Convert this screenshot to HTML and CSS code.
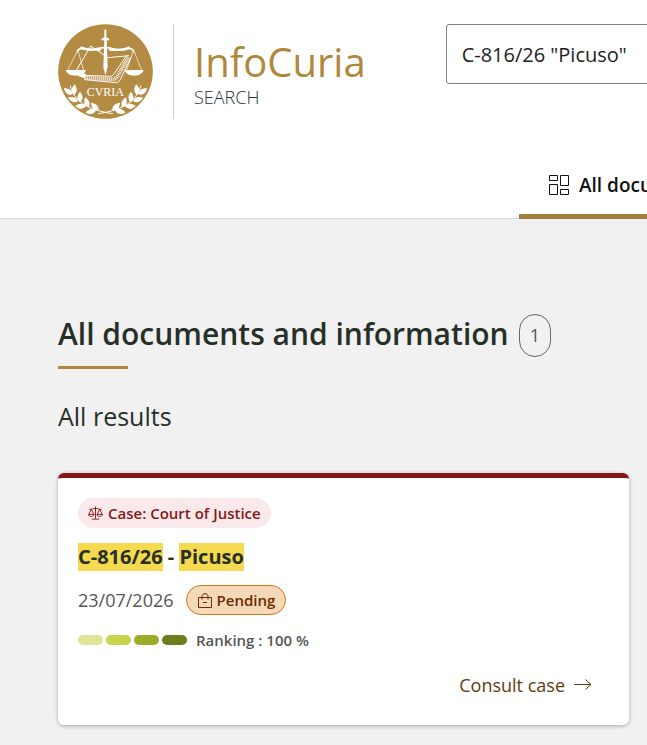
FILE: index.html
```html
<!DOCTYPE html>
<html lang="en">
<head>
<meta charset="utf-8">
<meta name="viewport" content="width=device-width, initial-scale=1">
<title>InfoCuria Search</title>
<link rel="stylesheet" href="styles.css">
</head>
<body>
<header class="header">
  <div class="topbar">
    <a class="brand" href="#">
      <svg class="logo" viewBox="24 27 285 285" aria-hidden="true">
        <defs>
          <path id="leaf" d="M0 0C-11 -7 -12 -19 -2 -32C8 -20 9 -9 0 0Z"/>
        </defs>
        <circle cx="166.500" cy="169.500" r="142" fill="#b38b42"/>
        <g fill="none" stroke="#fff" stroke-linecap="round">
          <path d="M82 110C84 100 94 100 101 102C125 110 138 98 165 98C192 98 207 111 231 102C240 99 249 101 251 110" stroke-width="5"/>
          <path d="M94 98C116 108 136 102 150 104M180 104C198 104 216 108 237 98" stroke-width="7"/>
          <path d="M81 110L53 166M85 110L101 166M249 110L230 166M253 110L275 166" stroke-width="2"/>
          <path d="M78 168L122 93L174 128L236 122" stroke-width="3"/>
          <path d="M104 181L182 184Q190 182 194 174L228 124M104 194L200 203Q207 202 211 194L243 128" stroke-width="3"/>
          <path d="M104 188L190 193Q198 192 203 183L236 126" stroke-width="12" stroke-opacity=".75" stroke-dasharray="4 2" stroke-linecap="butt"/>
        </g>
        <g fill="#fff">
          <path d="M47 165H108C104 177 93 182 78 182C62 182 51 177 47 165ZM224 165H281C277 177 267 182 252 182C238 182 228 177 224 165Z"/>
          <path d="M78 171L96 168L109 180L103 190L86 184Z"/>
          <path d="M163 46Q166 40 169 46L169 67L178 71L178 76L170 76L173 157L166 181L160 157L163 76L154 76L154 71L163 67Z"/>
        </g>
        <text class="logo-text" x="166" y="242" text-anchor="middle">CVRIA</text>
        <g fill="none" stroke="#fff" stroke-width="3" stroke-linecap="round">
          <path d="M61 213C73 255 104 283 188 296M272 213C260 255 229 283 145 296"/>
        </g>
        <g id="branch" fill="#fff">
          <use href="#leaf" transform="translate(68 238) rotate(-52)"/>
          <use href="#leaf" transform="translate(72 240) rotate(8)"/>
          <use href="#leaf" transform="translate(84 258) rotate(-68)"/>
          <use href="#leaf" transform="translate(91 262) rotate(2)"/>
          <use href="#leaf" transform="translate(108 274) rotate(-84)"/>
          <use href="#leaf" transform="translate(116 277) rotate(-16)"/>
          <use href="#leaf" transform="translate(138 286) rotate(-98)"/>
          <use href="#leaf" transform="translate(146 286) rotate(-42)"/>
        </g>
        <use href="#branch" transform="translate(333 0) scale(-1 1)"/>
      </svg>
      <span class="brand-text">
        <span class="brand-name">InfoCuria</span>
        <span class="brand-sub">SEARCH</span>
      </span>
    </a>
    <input class="search" type="text" aria-label="Search" value='C-816/26 "Picuso"'>
  </div>
  <nav class="tabs" aria-label="Result types">
    <a class="tab" href="#">
      <svg class="tab-icon" viewBox="0 0 20 20" fill="none" stroke="#111" aria-hidden="true">
        <path d="M.5.5H8.500V5.500H.500ZM.5 9.500H8.500V19.500H.500ZM11.500.5H19.500V10.500H11.500ZM11.500 14.500H19.500V19.500H11.500Z"/>
      </svg>
      All documents and information
    </a>
  </nav>
</header>
<main class="main">
  <div class="heading">
    <h1 class="title">All documents and information</h1>
    <span class="count">1</span>
  </div>
  <h2 class="subtitle">All results</h2>
  <article class="card">
    <span class="badge">
      <svg class="badge-icon" viewBox="0 0 16 16" fill="none" stroke="currentColor" aria-hidden="true">
        <path d="M8 .5V13.500M4 14H12M1.500 3.500C4 4 5.500 2.500 8 2.500S12 4 14.500 3.500M3.500 3.500L.8 9M3.500 3.500L6.200 9M12.500 3.500L9.800 9M12.500 3.500L15.200 9M.5 9H6.500C6 12 1 12 .5 9ZM9.500 9H15.500C15 12 10 12 9.500 9Z"/>
      </svg>
      Case: Court of Justice
    </span>
    <h3 class="case"><mark>C-816/26</mark> - <mark>Picuso</mark></h3>
    <div class="meta">
      <time class="date" datetime="2026-07-23">23/07/2026</time>
      <span class="status">
        <svg class="status-icon" viewBox="0 0 14 15" fill="none" stroke="currentColor" aria-hidden="true">
          <path d="M.5 4.500H13.500V14.500H.500ZM4 6.500V3.500C4 -.3 10 -.3 10 3.500V6.500M5 9.500H9"/>
        </svg>
        Pending
      </span>
    </div>
    <div class="ranking">
      <span class="bars"><i class="bar bar-1"></i><i class="bar bar-2"></i><i class="bar bar-3"></i><i class="bar bar-4"></i></span>
      Ranking : 100 %
    </div>
    <a class="consult" href="#">
      Consult case
      <svg class="arrow" viewBox="0 0 18 12" fill="none" stroke="currentColor" aria-hidden="true">
        <path d="M0 5.500H17M11.500 .5L17 5.500L11.500 10.500"/>
      </svg>
    </a>
  </article>
</main>
</body>
</html>
```
FILE: styles.css
```css
* {
  box-sizing: border-box;
}

body {
  margin: 0;
  background: #f1f1f1;
  color: #263028;
  font-family: "Open Sans", "Noto Sans", sans-serif;
  overflow-x: hidden;
}

a {
  text-decoration: none;
}

.header {
  background: #fff;
  border-bottom: 1px solid #d8d8d8;
}

.topbar {
  display: flex;
  align-items: flex-start;
  gap: 80px;
  padding: 24px 0 0 58px;
  overflow: hidden;
}

.brand {
  display: flex;
  flex: none;
}

.logo {
  width: 95px;
  height: 95px;
}

.logo-text {
  font-family: "Liberation Serif", serif;
  font-size: 36px;
  fill: #fff;
}

.brand-text {
  display: flex;
  flex-direction: column;
  margin-left: 20px;
  padding: 14px 0 0 20px;
  border-left: 1px solid #ccc;
}

.brand-name {
  color: #b0883c;
  font-size: 40px;
  line-height: 48px;
}

.brand-sub {
  color: #2b3238;
  font-size: 18px;
  font-weight: 300;
  line-height: 22px;
}

.search {
  flex: 1 0 480px;
  height: 60px;
  padding: 0 15px;
  border: 1px solid #808080;
  border-radius: 3px;
  background: #fff;
  color: #222;
  font: 20px "Open Sans", "Noto Sans", sans-serif;
}

.tabs {
  display: flex;
  margin: 32px 0 -1px;
  padding-left: 519px;
  overflow: hidden;
}

.tab {
  display: flex;
  flex: none;
  align-items: center;
  gap: 10px;
  height: 68px;
  padding: 4px 30px 0;
  border-bottom: 5px solid #a37f3d;
  color: #111;
  font-size: 19px;
  font-weight: 600;
  white-space: nowrap;
}

.tab-icon {
  width: 20px;
  height: 20px;
}

.main {
  padding: 95px 18px 20px 58px;
}

.heading {
  display: flex;
  align-items: center;
  gap: 10px;
}

.title {
  margin: 0;
  padding-bottom: 3px;
  font-size: 30px;
  font-weight: 600;
  line-height: 40px;
}

.count {
  padding: 0 10px;
  border: 1px solid #666;
  border-radius: 16px;
  color: #555;
  font-size: 18px;
  line-height: 41px;
}

.heading + .subtitle::before {
  content: "";
  display: block;
  width: 70px;
  height: 3px;
  margin: 9px 0 31px;
  background: #b0883c;
}

.subtitle {
  margin: 0 0 41px;
  font-size: 25px;
  font-weight: 400;
  line-height: 32px;
}

.card {
  display: flex;
  flex-direction: column;
  align-items: flex-start;
  padding: 20px;
  border-top: 5px solid #851818;
  border-radius: 6px;
  background: #fff;
  box-shadow: 0 1px 4px rgba(0, 0, 0, 0.3);
}

.badge {
  display: flex;
  align-items: center;
  gap: 5px;
  padding: 0 10px;
  border-radius: 15px;
  background: #fae9eb;
  color: #851818;
  font-size: 15px;
  font-weight: 600;
  line-height: 30px;
}

.badge-icon {
  width: 15px;
  height: 15px;
}

.case {
  margin: 15px 0 14px;
  font-size: 20px;
  font-weight: 700;
  line-height: 28px;
}

.case mark {
  display: inline-block;
  background: #f5d94e;
  color: inherit;
}

.meta {
  display: flex;
  align-items: center;
  gap: 12px;
}

.date {
  color: #555;
  font-size: 18px;
}

.status {
  display: flex;
  align-items: center;
  gap: 5px;
  padding: 0 10px 0 11px;
  border: 1px solid #cc7a1a;
  border-radius: 15px;
  background: #f4d9b8;
  color: #6b2a00;
  font-size: 15px;
  font-weight: 600;
  line-height: 28px;
}

.status-icon {
  width: 14px;
  height: 15px;
}

.ranking {
  display: flex;
  align-items: center;
  gap: 9px;
  margin-top: 14px;
  color: #555;
  font-size: 15px;
  font-weight: 600;
  line-height: 22px;
}

.bars {
  display: flex;
  gap: 3px;
}

.bar {
  width: 25px;
  height: 10px;
  border-radius: 5px;
}

.bar-1 {
  background: #dfe595;
}

.bar-2 {
  background: #c6d54a;
}

.bar-3 {
  background: #9cad2a;
}

.bar-4 {
  background: #6f7b1f;
}

.consult {
  display: flex;
  align-items: center;
  align-self: flex-end;
  gap: 9px;
  margin: 21px 17px 7px 0;
  color: #5e400c;
  font-size: 18px;
  font-weight: 500;
  line-height: 26px;
}

.arrow {
  width: 18px;
  height: 12px;
}
```
